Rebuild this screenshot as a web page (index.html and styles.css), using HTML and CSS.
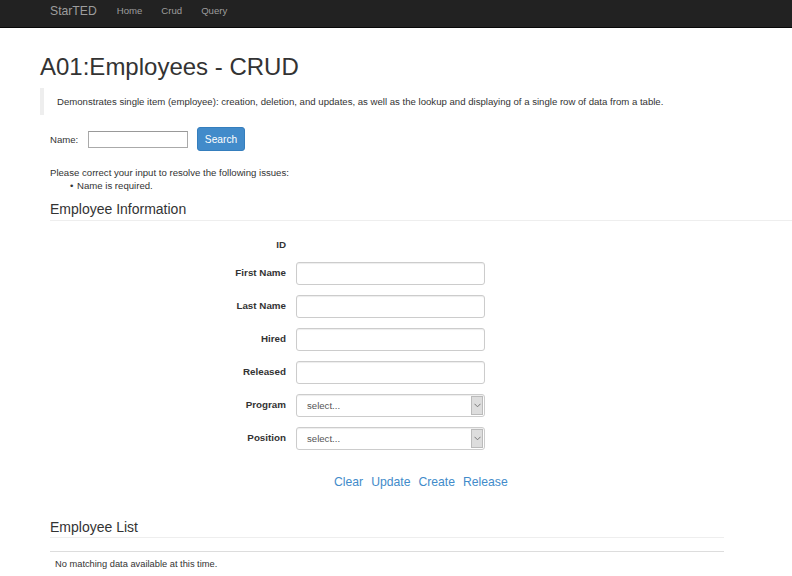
FILE: index.html
```html
<!DOCTYPE html>
<html lang="en">
<head>
<meta charset="utf-8">
<title>A01:Employees - CRUD</title>
<link rel="stylesheet" href="styles.css">
</head>
<body>
<nav class="navbar">
  <a class="brand" href="#">StarTED</a>
  <ul class="nav-links">
    <li><a href="#">Home</a></li>
    <li><a href="#">Crud</a></li>
    <li><a href="#">Query</a></li>
  </ul>
</nav>
<main class="page">
  <h1 class="title">A01:Employees - CRUD</h1>
  <blockquote class="lead">Demonstrates single item (employee): creation, deletion, and updates, as well as the lookup and displaying of a single row of data from a table.</blockquote>
  <div class="content">
    <form class="search">
      <label class="search-label">Name:</label>
      <input class="search-input" type="text">
      <button class="btn-primary" type="button">Search</button>
    </form>
    <div class="errors">
      <p>Please correct your input to resolve the following issues:</p>
      <ul>
        <li>Name is required.</li>
      </ul>
    </div>
    <h3 class="section-title wide">Employee Information</h3>
    <div class="form-grid">
      <div class="lbl">ID</div>
      <div class="id-val"></div>
      <div class="lbl">First Name</div>
      <input class="field" type="text">
      <div class="lbl">Last Name</div>
      <input class="field" type="text">
      <div class="lbl">Hired</div>
      <input class="field" type="text">
      <div class="lbl">Released</div>
      <input class="field" type="text">
      <div class="lbl">Program</div>
      <div class="field select"><span class="select-text">select...</span><span class="select-arrow"><svg width="7" height="5" viewBox="0 0 7 5"><path d="M0.5 0.8 L3.5 3.8 L6.5 0.8" fill="none" stroke="#777" stroke-width="1"/></svg></span></div>
      <div class="lbl">Position</div>
      <div class="field select"><span class="select-text">select...</span><span class="select-arrow"><svg width="7" height="5" viewBox="0 0 7 5"><path d="M0.5 0.8 L3.5 3.8 L6.5 0.8" fill="none" stroke="#777" stroke-width="1"/></svg></span></div>
    </div>
    <div class="actions">
      <a href="#">Clear</a>
      <a href="#">Update</a>
      <a href="#">Create</a>
      <a href="#">Release</a>
    </div>
    <h3 class="section-title narrow">Employee List</h3>
    <div class="table-empty">No matching data available at this time.</div>
  </div>
</main>
</body>
</html>
```
FILE: styles.css
```css
* { box-sizing: border-box; }
html, body { margin: 0; padding: 0; background: #fff; }
body {
  font-family: "Liberation Sans", Arial, sans-serif;
  font-size: 9.6px;
  line-height: 1.42857;
  color: #333;
}
a { text-decoration: none; }

.navbar {
  height: 28px;
  background: #222;
  border-bottom: 1px solid #080808;
  display: flex;
  align-items: center;
  padding-left: 50px;
}
.brand {
  color: #9d9d9d;
  font-size: 12.2px;
  line-height: 20px;
  margin-top: -5px;
}
.nav-links {
  list-style: none;
  display: flex;
  margin: 0 0 0 20px;
  padding: 0;
}
.nav-links li a {
  display: block;
  color: #9d9d9d;
  font-size: 9.6px;
  margin-top: -5px;
  margin-right: 19px;
}

.page { padding-left: 40px; }

.title {
  font-size: 24px;
  font-weight: 500;
  line-height: 1.1;
  margin: 26px 0 8px 0;
  color: #333;
}
.lead {
  margin: 0 0 12px 0;
  border-left: 4px solid #eee;
  padding: 6px 13px;
  font-size: 9.6px;
  line-height: 15px;
}
.content { padding-left: 10px; }

.search {
  display: flex;
  align-items: center;
  height: 24px;
}
.search-label { width: 38px; }
.search-input {
  width: 100px;
  height: 17px;
  border: 1px solid #aaa;
  border-top-color: #999;
  padding: 0 2px;
  margin: 0;
}
.btn-primary {
  margin-left: 9px;
  height: 24px;
  width: 48px;
  padding: 0;
  background: #428bca;
  border: 1px solid #357ebd;
  border-radius: 3px;
  color: #fff;
  font-family: inherit;
  font-size: 10.2px;
}

.errors { margin-top: 15px; }
.errors p { margin: 0; line-height: 13px; }
.errors ul { margin: 0; padding-left: 20px; line-height: 13px; list-style: none; }
.errors li::before {
  content: "\2022";
  display: inline-block;
  width: 7px;
}

.section-title {
  font-size: 14px;
  font-weight: 500;
  line-height: 1.1;
  margin: 10px 0 0 0;
  padding-bottom: 2px;
  border-bottom: 1px solid #eee;
}
.section-title.narrow { margin-right: 68px; margin-top: 29px; }

.form-grid {
  display: grid;
  grid-template-columns: 236px 189px;
  grid-template-rows: 14px;
  column-gap: 10px;
  row-gap: 10px;
  margin-top: 17px;
  align-items: center;
}
.lbl {
  text-align: right;
  font-weight: bold;
  font-size: 9.8px;
}
.id-val { height: 14px; }
.field {
  height: 23px;
  width: 189px;
  margin: 0;
  border: 1px solid #ccc;
  border-radius: 3px;
  box-shadow: inset 0 1px 1px rgba(0,0,0,.075);
  padding: 0 10px;
  font-family: inherit;
  font-size: 9.6px;
}
.select {
  display: flex;
  align-items: stretch;
  padding: 0 1px 0 10px;
}
.select-text {
  flex: 1;
  color: #555;
  line-height: 21px;
}
.select-arrow {
  width: 12px;
  margin: 1px 0;
  background: #ddd;
  border: 1px solid #bbb;
  display: flex;
  align-items: center;
  justify-content: center;
}

.actions {
  display: flex;
  gap: 8px;
  padding-left: 284px;
  margin-top: 23px;
}
.actions a {
  color: #428bca;
  font-size: 12.2px;
  line-height: 18px;
}

.table-empty {
  margin-right: 68px;
  margin-top: 13px;
  border-top: 1px solid #ddd;
  padding: 5px 5px;
  font-size: 9.3px;
  line-height: 15px;
}
```
